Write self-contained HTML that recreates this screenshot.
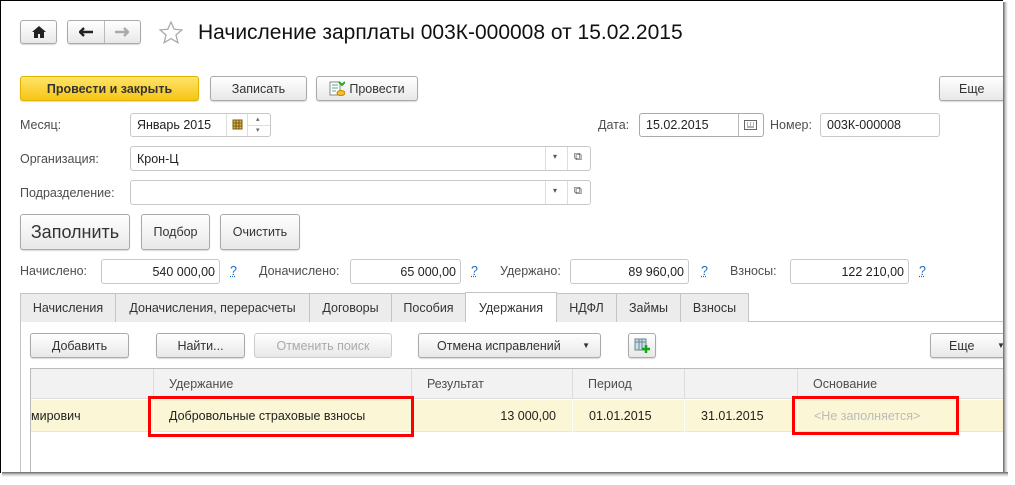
<!DOCTYPE html>
<html><head><meta charset="utf-8"><style>
*{box-sizing:border-box;margin:0;padding:0}
body{width:1015px;height:485px;background:#fff;position:relative;overflow:hidden;font-family:"Liberation Sans",Arial,sans-serif;font-size:12.5px;color:#333}
.a{position:absolute}
.btn{position:absolute;border:1px solid #aaa;border-radius:3px;background:linear-gradient(#fff,#e8e8e8);display:flex;align-items:center;justify-content:center;color:#333;box-shadow:0 1px 1px rgba(0,0,0,.15)}
.fld{position:absolute;border:1px solid #c8c8c8;border-radius:3px;background:#fff;display:flex;align-items:center;padding:0 6px;color:#222}
.lbl{position:absolute;color:#4d4d4d;line-height:14px}
.q{position:absolute;color:#1a6fc4;text-decoration:underline dotted;}
.tab{position:absolute;top:293px;height:29px;border:1px solid #c4c4c4;border-bottom:none;background:#ececec;display:flex;align-items:center;justify-content:center;color:#333}
.hc{position:absolute;top:369px;height:30px;border-right:1px solid #dcdcdc;display:flex;align-items:center;padding-left:15px;color:#4d4d4d}
.rc{position:absolute;top:400px;height:32px;display:flex;align-items:center;color:#222}
.red{position:absolute;border:3px solid #f00}
.sh{position:absolute;z-index:10}
</style></head><body>
<!-- page frame -->
<div class="sh" style="left:0;top:0;width:1004px;height:1px;background:#000"></div>
<div class="sh" style="left:0;top:0;width:1px;height:473px;background:#000"></div>
<div class="sh" style="left:1003px;top:0;width:12px;height:485px;background:#fff"></div>
<div class="sh" style="left:0;top:473px;width:1015px;height:12px;background:#fff"></div>
<div class="sh" style="left:1003px;top:2px;width:5px;height:474px;background:linear-gradient(90deg,#666,#ccc,#fff)"></div>
<div class="sh" style="left:2px;top:472px;width:1006px;height:5px;background:linear-gradient(#666,#ccc,#fff)"></div>

<!-- nav -->
<div class="btn" style="left:20px;top:20px;width:37px;height:24px"><svg width="14" height="12" viewBox="0 0 14 12"><path d="M7 0L0 6h2v6h4V8h2v4h4V6h2z" fill="#222"/></svg></div>
<div class="btn" style="left:67px;top:20px;width:74px;height:24px;justify-content:flex-start">
<div style="width:37px;height:22px;border-right:1px solid #bbb;display:flex;align-items:center;justify-content:center"><svg width="14" height="10"><path d="M1 5h13M5 1L1 5l4 4" stroke="#222" stroke-width="2.4" fill="none"/></svg></div>
<div style="width:36px;display:flex;align-items:center;justify-content:center"><svg width="14" height="10"><path d="M0 5h13M9 1l4 4-4 4" stroke="#aaa" stroke-width="2.4" fill="none"/></svg></div></div>
<svg class="a" style="left:159px;top:21px" width="24" height="23" viewBox="0 0 24 23"><path d="M12 1l3.2 7.3 7.8.6-6 5.1 1.9 7.7L12 17.6 5.1 21.7 7 14 1 8.9l7.8-.6z" fill="none" stroke="#aaa" stroke-width="1.3"/></svg>
<div class="a" style="left:198px;top:21px;font-size:21px;color:#111;line-height:24px">Начисление зарплаты 003К-000008 от 15.02.2015</div>

<!-- command bar -->
<div class="btn" style="left:20px;top:76px;width:179px;height:25px;background:linear-gradient(#ffe46a,#f6c515);border-color:#e0b400;font-weight:bold;color:#333">Провести и закрыть</div>
<div class="btn" style="left:210px;top:76px;width:97px;height:25px">Записать</div>
<div class="btn" style="left:316px;top:76px;width:102px;height:25px"><svg width="16" height="16" style="margin-right:4px"><rect x="1" y="1" width="10" height="13" fill="#fff" stroke="#888"/><path d="M3 4h6M3 7h6M3 10h4" stroke="#5a8"/><ellipse cx="12" cy="12" rx="4" ry="2.5" fill="#f3c030" stroke="#b80"/><path d="M10 1l3 3 3-3" stroke="#2a2" stroke-width="2" fill="none"/></svg>Провести</div>
<div class="btn" style="left:939px;top:76px;width:70px;height:25px;justify-content:flex-start;padding-left:19px">Еще</div>

<!-- fields -->
<div class="lbl" style="left:20px;top:118px">Месяц:</div>
<div class="fld" style="left:130px;top:113px;width:141px;height:24px">Январь 2015</div>
<div class="a" style="left:226px;top:114px;width:1px;height:22px;background:#ddd"></div>
<div class="a" style="left:247px;top:114px;width:1px;height:22px;background:#ddd"></div>
<div class="a" style="left:248px;top:125px;width:22px;height:1px;background:#ddd"></div>
<svg class="a" style="left:232px;top:119px" width="11" height="11"><rect x="1" y="1" width="9" height="9" fill="#d9b64a" stroke="#7a5a10"/><path d="M1 4h9M1 7h9M4 1v9M7 1v9" stroke="#7a5a10"/></svg>
<div class="a" style="left:256px;top:115px;font-size:7px;color:#666">▴</div>
<div class="a" style="left:256px;top:126px;font-size:7px;color:#666">▾</div>

<div class="lbl" style="left:598px;top:118px">Дата:</div>
<div class="fld" style="left:639px;top:113px;width:125px;height:24px;border-color:#aaa">15.02.2015</div>
<div class="a" style="left:738px;top:114px;width:1px;height:22px;background:#bbb"></div>
<svg class="a" style="left:744px;top:120px" width="13" height="10"><rect x=".5" y=".5" width="12" height="9" fill="#fff" stroke="#666"/><path d="M3 3h1M6 3h1M9 3h1M3 5h1M6 5h1M9 5h1M3 7h7" stroke="#666"/></svg>
<div class="lbl" style="left:770px;top:118px">Номер:</div>
<div class="fld" style="left:820px;top:113px;width:120px;height:24px">003К-000008</div>

<div class="lbl" style="left:20px;top:152px">Организация:</div>
<div class="fld" style="left:130px;top:146px;width:461px;height:25px">Крон-Ц</div>
<div class="a" style="left:545px;top:147px;width:1px;height:23px;background:#ddd"></div>
<div class="a" style="left:567px;top:147px;width:1px;height:23px;background:#ddd"></div>
<div class="a" style="left:553px;top:152px;font-size:8px;color:#555">▾</div>
<div class="a" style="left:574px;top:151px;font-size:11px;color:#444">⧉</div>

<div class="lbl" style="left:20px;top:186px">Подразделение:</div>
<div class="fld" style="left:130px;top:180px;width:461px;height:25px"></div>
<div class="a" style="left:545px;top:181px;width:1px;height:23px;background:#ddd"></div>
<div class="a" style="left:567px;top:181px;width:1px;height:23px;background:#ddd"></div>
<div class="a" style="left:553px;top:186px;font-size:8px;color:#555">▾</div>
<div class="a" style="left:574px;top:185px;font-size:11px;color:#444">⧉</div>

<div class="btn" style="left:20px;top:214px;width:110px;height:36px;font-size:18px">Заполнить</div>
<div class="btn" style="left:141px;top:214px;width:69px;height:36px">Подбор</div>
<div class="btn" style="left:220px;top:214px;width:80px;height:36px">Очистить</div>

<!-- totals -->
<div class="lbl" style="left:20px;top:264px">Начислено:</div>
<div class="fld" style="left:101px;top:259px;width:119px;height:25px;justify-content:flex-end;padding-right:4px">540 000,00</div>
<div class="q" style="left:230px;top:264px">?</div>
<div class="lbl" style="left:259px;top:264px">Доначислено:</div>
<div class="fld" style="left:350px;top:259px;width:111px;height:25px;justify-content:flex-end;padding-right:4px">65 000,00</div>
<div class="q" style="left:471px;top:264px">?</div>
<div class="lbl" style="left:500px;top:264px">Удержано:</div>
<div class="fld" style="left:570px;top:259px;width:119px;height:25px;justify-content:flex-end;padding-right:4px">89 960,00</div>
<div class="q" style="left:701px;top:264px">?</div>
<div class="lbl" style="left:730px;top:264px">Взносы:</div>
<div class="fld" style="left:790px;top:259px;width:119px;height:25px;justify-content:flex-end;padding-right:4px">122 210,00</div>
<div class="q" style="left:919px;top:264px">?</div>

<!-- tabs -->
<div class="a" style="left:20px;top:321px;width:990px;height:1px;background:#c4c4c4"></div>
<div class="a" style="left:20px;top:321px;width:1px;height:152px;background:#c4c4c4"></div>
<div class="tab" style="left:20px;width:96px">Начисления</div>
<div class="tab" style="left:115px;width:195px">Доначисления, перерасчеты</div>
<div class="tab" style="left:309px;width:83px">Договоры</div>
<div class="tab" style="left:391px;width:75px">Пособия</div>
<div class="tab" style="left:465px;top:292px;width:92px;height:30px;background:#fff;z-index:2">Удержания</div>
<div class="tab" style="left:556px;width:61px">НДФЛ</div>
<div class="tab" style="left:616px;width:65px">Займы</div>
<div class="tab" style="left:680px;width:69px">Взносы</div>

<!-- table commands -->
<div class="btn" style="left:30px;top:333px;width:99px;height:25px">Добавить</div>
<div class="btn" style="left:156px;top:333px;width:89px;height:25px">Найти...</div>
<div class="btn" style="left:254px;top:333px;width:138px;height:25px;color:#aaa;box-shadow:none;border-color:#ccc">Отменить поиск</div>
<div class="btn" style="left:418px;top:333px;width:183px;height:25px;justify-content:flex-start;padding-left:18px">Отмена исправлений<span style="position:absolute;right:10px;font-size:8px">▼</span></div>
<div class="btn" style="left:628px;top:333px;width:28px;height:25px"><svg width="16" height="15"><rect x="1" y="1" width="11" height="11" fill="#cde" stroke="#688"/><path d="M1 4h11M5 1v11M8 1v11" stroke="#688"/><path d="M12 7v8M8 11h8" stroke="#1a1" stroke-width="2.5"/></svg></div>
<div class="btn" style="left:930px;top:333px;width:85px;height:25px;justify-content:flex-start;padding-left:18px">Еще<span style="position:absolute;left:66px;font-size:8px">▼</span></div>

<!-- table -->
<div class="a" style="left:30px;top:368px;width:975px;height:105px;border-left:1px solid #bbb;border-top:1px solid #bbb"></div>
<div class="a" style="left:31px;top:369px;width:972px;height:30px;background:#f2f2f2;border-bottom:1px solid #ddd"></div>
<div class="hc" style="left:31px;width:123px"></div>
<div class="hc" style="left:154px;width:258px">Удержание</div>
<div class="hc" style="left:412px;width:161px">Результат</div>
<div class="hc" style="left:573px;width:112px">Период</div>
<div class="hc" style="left:685px;width:113px"></div>
<div class="hc" style="left:798px;width:205px;border-right:none">Основание</div>
<div class="a" style="left:31px;top:400px;width:972px;height:32px;background:#fbf6d5;border-bottom:1px solid #e5e5e5"></div>
<div class="a" style="left:153px;top:400px;width:1px;height:32px;background:#fff"></div>
<div class="a" style="left:411px;top:400px;width:1px;height:32px;background:#fff"></div>
<div class="a" style="left:572px;top:400px;width:1px;height:32px;background:#fff"></div>
<div class="a" style="left:684px;top:400px;width:1px;height:32px;background:#fff"></div>
<div class="a" style="left:797px;top:400px;width:1px;height:32px;background:#fff"></div>
<div class="rc" style="left:31px">мирович</div>
<div class="rc" style="left:169px">Добровольные страховые взносы</div>
<div class="rc" style="left:412px;width:144px;justify-content:flex-end">13 000,00</div>
<div class="rc" style="left:589px">01.01.2015</div>
<div class="rc" style="left:701px">31.01.2015</div>
<div class="rc" style="left:814px;color:#bbb">&lt;Не заполняется&gt;</div>
<div class="red" style="left:148px;top:396px;width:266px;height:41px"></div>
<div class="red" style="left:792px;top:396px;width:167px;height:39px"></div>
</body></html>
